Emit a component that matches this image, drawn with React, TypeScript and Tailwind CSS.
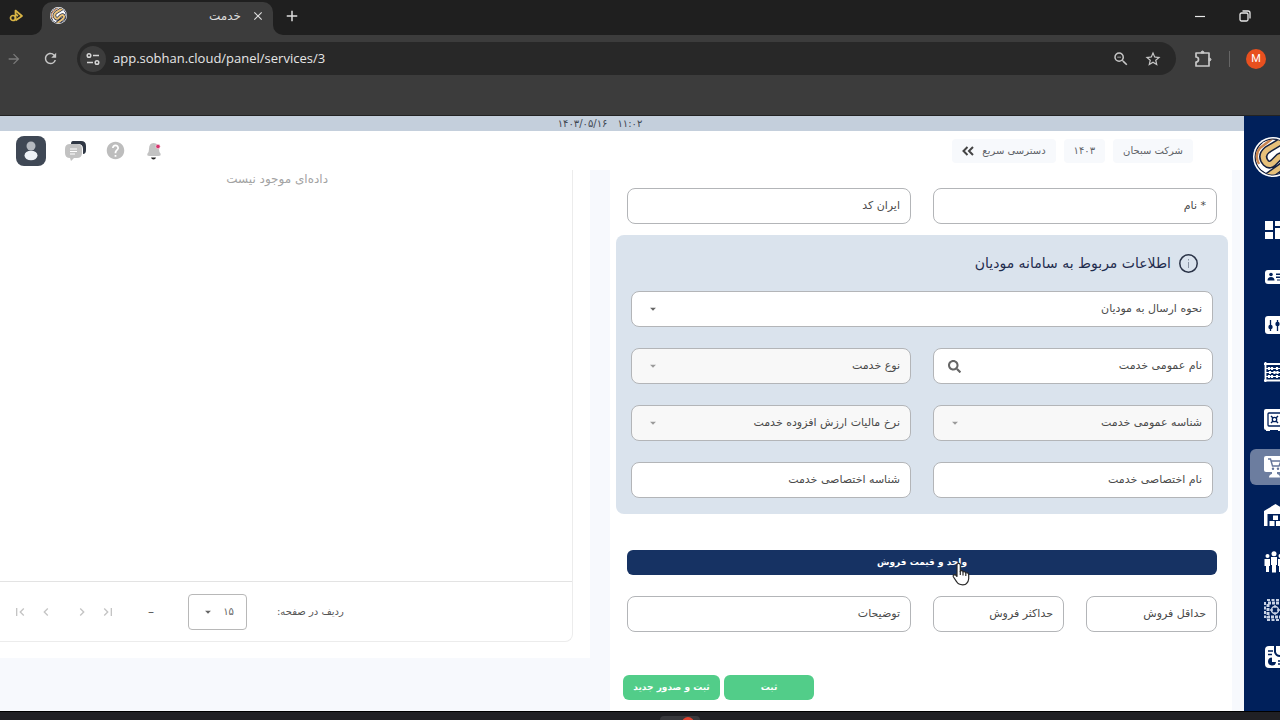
import React from 'react';
import {
  MdArrowForward,
  MdRefresh,
  MdClose,
  MdAdd,
  MdZoomOut,
  MdStarBorder,
  MdArrowDropDown,
  MdFirstPage,
  MdLastPage,
  MdChevronLeft,
  MdChevronRight,
  MdHelp,
} from 'react-icons/md';
import { FaSearch } from 'react-icons/fa';

// ---------- logo ----------

const Logo = ({ size }: { size: number }) => (
  <svg width={size} height={size} viewBox="0 0 40 40" className="shrink-0">
    <defs>
      <clipPath id={`disc-${size}`}>
        <circle cx="20" cy="20" r="17.5" />
      </clipPath>
    </defs>
    <circle cx="20" cy="20" r="20" fill="#fff" />
    <circle cx="20" cy="20" r="18.5" fill="#0e1a3a" />
    <g clipPath={`url(#disc-${size})`} fill="none" strokeLinejoin="round">
      <circle cx="20" cy="20" r="17.5" fill="#fff" />
      <path d="M24 -2 L7 11 Q1 18 6 27" stroke="#c9854f" strokeWidth="2.5" />
      <path d="M32 2 L14 13 Q7 19 13 26 Q16 29 20 26 L26 20 Q32 17 33 23 Q33 27 28 30 L14 40" stroke="#14203f" strokeWidth="8" />
      <path d="M32 2 L14 13 Q7 19 13 26 Q16 29 20 26 L26 20 Q32 17 33 23 Q33 27 28 30 L14 40" stroke="#e6c07a" strokeWidth="5" />
    </g>
  </svg>
);

// ---------- sidebar icons ----------

const DashboardIcon = () => (
  <svg width="20" height="20" viewBox="0 0 20 20" fill="#fff">
    <path d="M1 1h8v9H1zM1 12h8v7H1zM11 1h8v5h-8zM11 8h8v11h-8z" />
  </svg>
);

const CardIcon = () => (
  <svg width="20" height="20" viewBox="0 0 20 20">
    <rect x="1" y="3" width="19" height="14" rx="3" fill="#fff" />
    <circle cx="7" cy="7.500" r="1.800" fill="#00205b" />
    <path d="M3.500 13.500q0-3.500 3.500-3.500t3.500 3.500zM12 6.500h6V8h-6zM12 9.500h6V11h-6zM13 12.500h5v1h-5z" fill="#00205b" />
  </svg>
);

const SlidersIcon = () => (
  <svg width="20" height="20" viewBox="0 0 20 20">
    <rect x="1" y="1" width="18" height="18" rx="3" fill="#fff" />
    <path d="M6.500 5v11M13.500 5v11" stroke="#00205b" strokeWidth="1.300" />
    <circle cx="6.500" cy="12" r="2.200" fill="#00205b" />
    <circle cx="13.500" cy="9" r="2.200" fill="#00205b" />
  </svg>
);

const AbacusIcon = () => (
  <svg width="20" height="20" viewBox="0 0 20 20" stroke="#fff">
    <path d="M1.500 0v20M18.500 0v20M0 18.500h20M0 2h20" strokeWidth="1.800" />
    <path d="M2 6.500h16M2 10.500h16M2 14.500h16" strokeWidth="1" />
    <path d="M5 5v3M8 5v3M13 5v3M6 9v3M10.500 9v3M13.500 9v3M5 13v3M8 13v3M13 13v3" strokeWidth="2.200" />
  </svg>
);

const SafeIcon = () => (
  <svg width="20" height="22" viewBox="0 0 20 22">
    <rect x="0" y="0" width="20" height="21" rx="2" fill="#fff" />
    <path d="M2 20h4v2H2zM14 20h4v2h-4z" fill="#fff" />
    <rect x="4" y="4" width="13" height="13" rx="1" fill="none" stroke="#00205b" strokeWidth="1.300" />
    <circle cx="10.500" cy="10.500" r="2.200" fill="none" stroke="#00205b" strokeWidth="1.300" />
    <path d="M7 7l2 2M14 7l-2 2M7 14l2-2M14 14l-2-2" stroke="#00205b" strokeWidth="1.400" />
  </svg>
);

const ShopIcon = () => (
  <svg width="22" height="24" viewBox="0 0 22 24">
    <rect x="0" y="1" width="21" height="16" rx="2" fill="#fff" />
    <path d="M8 16h5v3q3 .5 3 3.500H5q0-3 3-3.500z" fill="#fff" />
    <path d="M4 4h2.500l2 7H15l2-5H7.500" fill="none" stroke="#64759a" strokeWidth="1.400" />
    <circle cx="9" cy="13.700" r="1.200" fill="#64759a" />
    <circle cx="14" cy="13.700" r="1.200" fill="#64759a" />
  </svg>
);

const WarehouseIcon = () => (
  <svg width="23" height="22" viewBox="0 0 23 22">
    <path d="M0 7L11.500 0 23 7v15h-3.500V10h-16v12H0z" fill="#fff" />
    <path d="M9 11.500h5v4.500H9zM5.500 17h5v5h-5zM12 17h5v5h-5z" fill="#fff" />
  </svg>
);

const PeopleIcon = () => (
  <svg width="20" height="22" viewBox="0 0 20 22" fill="#fff">
    <circle cx="3.500" cy="5" r="2" />
    <circle cx="10" cy="2.700" r="2.500" />
    <circle cx="16.500" cy="5" r="2" />
    <path d="M.5 8h5.500v7H5v6H2v-6H.5zM7 6h6v8h-1v7.500H8V14H7zM14 8h5.500v7H18v6h-3v-6h-1z" />
  </svg>
);

const ChipIcon = () => (
  <svg width="22" height="22" viewBox="0 0 22 22" fill="none" stroke="#c9d3e6">
    <rect x="4" y="4" width="14" height="14" strokeWidth="3" strokeDasharray="3 1" />
    <path d="M1 3v16M21 3v16M3 1h16M3 21h16" strokeWidth="2" strokeDasharray="3 1.500" />
    <circle cx="11" cy="11" r="3.500" strokeWidth="1.500" />
    <path d="M11 6v3M11 13v3M6 11h3M13 11h3" strokeWidth="1.300" />
  </svg>
);

const ReportIcon = () => (
  <svg width="22" height="22" viewBox="0 0 22 22">
    <rect x="1" y="0" width="20" height="22" rx="4" fill="#fff" />
    <path d="M4 5h5M4 8.500h4" stroke="#00205b" strokeWidth="1.500" />
    <path d="M11 0v6q1 4 5 4h6" fill="none" stroke="#00205b" strokeWidth="2" />
    <path d="M8 11.500a4 4 0 1 0 4 4.500H8z" fill="#00205b" />
    <path d="M14 15h5M14 18h5" stroke="#00205b" strokeWidth="1.500" />
  </svg>
);

const NAV_ITEMS = [
  { title: 'داشبورد', icon: DashboardIcon },
  { title: 'اشخاص', icon: CardIcon },
  { title: 'تنظیمات', icon: SlidersIcon },
  { title: 'حسابداری', icon: AbacusIcon },
  { title: 'خزانه', icon: SafeIcon },
  { title: 'فروش', icon: ShopIcon, active: true },
  { title: 'انبار', icon: WarehouseIcon },
  { title: 'پرسنل', icon: PeopleIcon },
  { title: 'تولید', icon: ChipIcon },
  { title: 'گزارش', icon: ReportIcon },
];

// ---------- browser window ----------

const TabStrip = () => (
  <div className="flex h-[35px] shrink-0 items-center bg-[#1f1f1f] text-[#dedede]">
    <div className="flex h-full w-[42px] items-center bg-[#3c3c3c]">
      <div className="flex h-full w-full items-center rounded-br-[10px] bg-[#1f1f1f] pb-1 pl-2">
        <svg width="16" height="16" viewBox="0 0 16 16" fill="none" stroke="#d9b545" strokeWidth="1.700">
          <path d="M7.500 12V2.500l6.500 5.500-6.500 4.500" strokeLinejoin="round" />
          <circle cx="5" cy="10" r="2.500" />
          <path d="M7.500 6l2.500 2" />
        </svg>
      </div>
    </div>
    <div className="flex h-full w-[231px] flex-col pt-0.5">
      <div className="flex flex-1 items-center rounded-t-[10px] bg-[#3c3c3c] px-2 pb-1.5">
        <Logo size={17} />
        <span dir="rtl" className="mx-2.5 flex-1 text-[12px]">خدمت</span>
        <button type="button" aria-label="Close tab">
          <MdClose size={14} />
        </button>
      </div>
    </div>
    <div className="flex h-full flex-1 bg-[#3c3c3c]">
      <div className="flex flex-1 items-center rounded-bl-[10px] bg-[#1f1f1f] pb-1">
        <button type="button" aria-label="New tab" className="ml-2.5">
          <MdAdd size={18} />
        </button>
        <div className="ml-auto flex items-center gap-[33px] pr-[29px]">
          <button type="button" aria-label="Minimize">
            <svg width="12" height="12" viewBox="0 0 12 12" stroke="#e8e8e8">
              <path d="M1 6.500h10" strokeWidth="1.200" />
            </svg>
          </button>
          <button type="button" aria-label="Restore">
            <svg width="12" height="12" viewBox="0 0 12 12" fill="none" stroke="#e8e8e8" strokeWidth="1.300">
              <rect x="1" y="3" width="8" height="8" rx="1.500" />
              <path d="M3.500 1h5.500q2 0 2 2v5.500" />
            </svg>
          </button>
        </div>
      </div>
    </div>
  </div>
);

const Toolbar = () => (
  <div className="flex h-[81px] shrink-0 items-start border-b border-[#232323] bg-[#3c3c3c] pt-[7px] text-[#c7c7c7]">
    <div className="flex h-[33px] flex-1 items-center">
      <button type="button" aria-label="Forward" className="ml-1.5 text-[#7a7a7a]">
        <MdArrowForward size={16} />
      </button>
      <button type="button" aria-label="Reload" className="mr-[18px] ml-5">
        <MdRefresh size={17} />
      </button>
      <div className="flex h-full flex-1 items-center gap-3.5 rounded-full bg-[#282828] pr-3.5 pl-[3px]">
        <div className="flex flex-1 items-center gap-[7px]">
          <span className="flex size-[26px] items-center justify-center rounded-full bg-[#3c3c3c]">
            <svg width="14" height="14" viewBox="0 0 14 14" fill="none" stroke="#d6d6d6" strokeWidth="1.500">
              <circle cx="3" cy="3.500" r="1.800" />
              <path d="M7 3.500h6M1 10.500h6" />
              <circle cx="11" cy="10.500" r="1.800" />
            </svg>
          </span>
          <input
            aria-label="Address"
            defaultValue="app.sobhan.cloud/panel/services/3"
            className="flex-1 bg-transparent font-['Open_Sans',sans-serif] text-[13px] text-[#e6e6e6] outline-none"
          />
        </div>
        <button type="button" aria-label="Zoom"><MdZoomOut size={18} /></button>
        <button type="button" aria-label="Bookmark"><MdStarBorder size={18} /></button>
      </div>
      <button type="button" aria-label="Extensions" className="ml-[17px]">
        <svg width="20" height="20" viewBox="0 0 20 20" fill="none" stroke="currentColor" strokeWidth="1.700">
          <path d="M3 4h13v13H3v-4q2.500 0 2.500-2.500T3 8z" strokeLinejoin="round" />
          <path d="M8 4q0-2 1.500-2T11 4zM16 9q2 0 2 1.500T16 12z" fill="currentColor" strokeWidth="1" />
        </svg>
      </button>
      <span className="mx-4 h-4 w-px bg-[#656565]" />
      <button
        type="button"
        className="mr-3.5 flex size-5 items-center justify-center rounded-full bg-[#e8501f] font-['Roboto',sans-serif] text-[11px] leading-none text-white"
      >
        M
      </button>
    </div>
  </div>
);

// ---------- app header ----------

const Chip = ({ children }: { children: React.ReactNode }) => (
  <button type="button" className="flex h-6 items-center gap-2 rounded bg-[#f7f9fc] px-2.5 text-[10px] text-[#5f6368]">
    {children}
  </button>
);

const Header = () => (
  <>
    <div dir="rtl" className="flex h-[15px] shrink-0 items-center justify-center gap-2.5 bg-[#c4cfdc] pr-11 text-[10px] leading-none text-[#3e4652]">
      <span>۱۱:۰۲</span>
      <span>۱۴۰۳/۰۵/۱۶</span>
    </div>
    <header className="flex h-[39px] shrink-0 items-center bg-white pr-[51px] pl-4">
      <div className="flex items-center gap-[19px]">
        <button type="button" aria-label="پروفایل" className="flex size-[30px] items-center justify-center rounded-lg bg-[#3f4855]">
          <svg width="16" height="20" viewBox="0 0 16 20">
            <circle cx="8" cy="5" r="4.500" fill="#b4b9c0" />
            <ellipse cx="8" cy="14.500" rx="6.500" ry="4.800" fill="#eef2f7" />
          </svg>
        </button>
        <button type="button" aria-label="پیام‌ها">
          <svg width="21" height="20" viewBox="0 0 21 20">
            <path d="M8 0h8q5 0 5 5v4q0 4-3 4V8q0-5-5-5H6q0-3 2-3z" fill="#2f3744" />
            <path d="M5 3h7q5 0 5 5v4q0 5-5 5H9l-3 3-1-3q-5 0-5-5V8q0-5 5-5z" fill="#c2c2c2" />
            <path d="M5 8h7M5 10.500h7M5 13h5" stroke="#fff" strokeWidth="1" />
          </svg>
        </button>
        <button type="button" aria-label="راهنما" className="text-[#bdbdbd]">
          <MdHelp size={21} />
        </button>
        <button type="button" aria-label="اعلان‌ها">
          <svg width="18" height="18" viewBox="0 0 18 18">
            <path d="M8.500 1q5.500 0 5.500 6 0 3 1.500 4.500.8 2.500-2 2.500h-9q-3 0-2-2.500Q4 10 4 7q0-6 4.500-6z" fill="#c2c2c2" />
            <path d="M6 15.500h5q-.5 2-2.500 2t-2.500-2z" fill="#222" />
            <circle cx="13" cy="4.500" r="2.200" fill="#d6336c" stroke="#fff" strokeWidth=".5" />
          </svg>
        </button>
      </div>
      <div dir="rtl" className="ml-auto flex gap-2">
        <Chip>شرکت سبحان</Chip>
        <Chip>۱۴۰۳</Chip>
        <Chip>
          دسترسی سریع
          <svg width="12" height="10" viewBox="0 0 12 10" fill="none" stroke="#444" strokeWidth="2">
            <path d="M5.500 1l-4 4 4 4M11 1L7 5l4 4" />
          </svg>
        </Chip>
      </div>
    </header>
  </>
);

// ---------- form ----------

interface FieldProps {
  label: string;
  kind?: 'text' | 'select';
  disabled?: boolean;
  search?: boolean;
  className?: string;
}

const Field: React.FC<FieldProps> = ({ label, kind = 'text', disabled, search, className = '' }) => (
  <label
    className={`flex h-9 items-center rounded-lg border border-[#b3b5b8] pr-2.5 text-[11px] text-[#4a4a4a] ${
      disabled ? 'bg-[#f8f8f8]' : 'bg-white'
    } ${className}`}
  >
    <span className="whitespace-nowrap">{label}</span>
    {kind === 'select' ? (
      <>
        <select disabled={disabled} className="min-w-0 flex-1 appearance-none bg-transparent outline-none" />
        <MdArrowDropDown size={14} className={`ml-3.5 ${disabled ? 'text-[#9a9a9a]' : 'text-[#666]'}`} />
      </>
    ) : (
      <input type="text" disabled={disabled} className="min-w-0 flex-1 bg-transparent outline-none" />
    )}
    {search && (
      <FaSearch size={13} className="ml-3.5 text-[#666]" />
    )}
  </label>
);

const HandCursor = () => (
  <svg width="20" height="24" viewBox="0 0 20 24" className="pointer-events-none absolute top-3 left-[325px]">
    <path
      d="M6 1.500q1.800-.6 2.300 1.500v6q2-.8 2.800.8 2-.6 2.700 1 2.600-.4 2.900 2v4q-.3 3-2 4.500-1 1.500-4 1.500-4.300 0-6-3L1.500 15q-1-2 1-2.300 1.500 0 2.500 2V3q0-1.300 1-1.500z"
      fill="#fff"
      stroke="#2a2a2a"
      strokeWidth="1.200"
    />
    <path d="M8.300 9v4M11 10v3.500M13.800 11v3" stroke="#2a2a2a" strokeWidth="1.200" />
  </svg>
);

const ServiceForm = () => (
  <form dir="rtl" className="mr-3 flex w-1/2 flex-col bg-white pt-[18px] pr-1 pl-1.5">
    <div className="grid grid-cols-2 gap-[22px] px-[11px]">
      <Field label="* نام" />
      <Field label="ایران کد" />
    </div>

    <fieldset className="mt-[11px] rounded-lg bg-[#dae3ed] px-[15px] pt-[17px] pb-4">
      <h2 className="flex items-center gap-2 pr-[15px] text-[14px] leading-[22px] text-[#1f2c4d]">
        <svg width="19" height="19" viewBox="0 0 19 19" fill="none" stroke="#2a3347">
          <circle cx="9.500" cy="9.500" r="8.700" strokeWidth="1.500" />
          <path d="M9.500 5v1.500M9.500 8v6" strokeWidth="1" stroke="#8a93a3" />
        </svg>
        اطلاعات مربوط به سامانه مودیان
      </h2>
      <div className="mt-[17px] grid grid-cols-2 gap-x-[22px] gap-y-[21px]">
        <Field label="نحوه ارسال به مودیان" kind="select" className="col-span-2" />
        <Field label="نام عمومی خدمت" search />
        <Field label="نوع خدمت" kind="select" disabled />
        <Field label="شناسه عمومی خدمت" kind="select" disabled />
        <Field label="نرخ مالیات ارزش افزوده خدمت" kind="select" disabled />
        <Field label="نام اختصاصی خدمت" />
        <Field label="شناسه اختصاصی خدمت" />
      </div>
    </fieldset>

    <div className="mt-9 px-[11px]">
      <button type="button" className="relative flex h-[25px] w-full items-center justify-center rounded-md bg-[#163263] text-[9px] font-bold text-white">
        واحد و قیمت فروش
        <HandCursor />
      </button>
      <div className="mt-[21px] grid grid-cols-4 gap-[22px]">
        <Field label="حداقل فروش" />
        <Field label="حداکثر فروش" />
        <Field label="توضیحات" className="col-span-2" />
      </div>
    </div>

    <div className="mt-[43px] flex justify-end gap-1 pl-[7px] text-[9px] font-bold text-white">
      <button type="submit" className="h-[25px] w-[90px] rounded-md bg-[#52cd89]">ثبت</button>
      <button type="button" className="h-[25px] w-[97px] rounded-md bg-[#52cd89]">ثبت و صدور جدید</button>
    </div>
  </form>
);

// ---------- list ----------

const ServiceList = () => (
  <section className="mr-5 flex flex-1 flex-col self-start bg-white pr-[17px] pb-4">
    <div className="flex flex-col rounded-br-lg border-r border-b border-[#ececec]">
      <p dir="rtl" className="h-[412px] border-b border-[#e3e3e3] pr-[244px] text-[12px] text-[#a3a3a3]">
        داده‌ای موجود نیست
      </p>
      <div className="flex h-[59px] items-center pl-3 text-[#c4c4c4]">
        <button type="button" aria-label="صفحه اول"><MdFirstPage size={16} /></button>
        <button type="button" aria-label="صفحه قبل" className="ml-2.5"><MdChevronLeft size={16} /></button>
        <button type="button" aria-label="صفحه بعد" className="ml-5"><MdChevronRight size={16} /></button>
        <button type="button" aria-label="صفحه آخر" className="ml-2.5"><MdLastPage size={16} /></button>
        <span className="ml-8 text-[12px] text-[#555]">–</span>
        <div className="ml-[34px] flex h-9 w-[59px] items-center justify-between rounded border border-[#b8b8b8] px-3 text-[#666]">
          <MdArrowDropDown size={14} />
          <select id="rows" dir="rtl" className="appearance-none bg-transparent text-[10px]">
            <option>۱۵</option>
          </select>
        </div>
        <label htmlFor="rows" dir="rtl" className="ml-[30px] text-[10px] text-[#555]">
          ردیف در صفحه:
        </label>
      </div>
    </div>
  </section>
);

const Sidebar = () => (
  <aside className="flex w-9 shrink-0 flex-col overflow-hidden bg-[#00205b] pb-9">
    <div className="flex h-24 pt-[21px] pl-[9px]">
      <Logo size={40} />
    </div>
    <nav className="flex flex-1 flex-col justify-between pl-1.5">
      {NAV_ITEMS.map(({ title, icon: Icon, active }) => (
        <a
          key={title}
          href="#"
          aria-label={title}
          className={`flex h-9 w-12 items-center rounded-md pl-3.5 ${active ? 'bg-[#6c7d9f]' : ''}`}
        >
          <Icon />
        </a>
      ))}
    </nav>
  </aside>
);

export default function App() {
  return (
    <div className="flex h-screen flex-col overflow-hidden bg-[#202020] font-['DejaVu_Sans',sans-serif]">
      <TabStrip />
      <Toolbar />
      <div className="flex min-h-0 flex-1">
        <div className="flex min-w-0 flex-1 flex-col">
          <Header />
          <main className="flex min-h-0 flex-1 bg-[#f7f9fd]">
            <ServiceList />
            <ServiceForm />
          </main>
        </div>
        <Sidebar />
      </div>
      <div className="flex h-[9px] shrink-0 items-end justify-center overflow-hidden border-t border-black bg-[#202024] pl-20">
        <div className="flex h-1 w-10 justify-end rounded-t bg-[#38383c] pr-1.5">
          <span className="mt-px h-3 w-3 rounded-full bg-[#e0412f]" />
        </div>
      </div>
    </div>
  );
}
